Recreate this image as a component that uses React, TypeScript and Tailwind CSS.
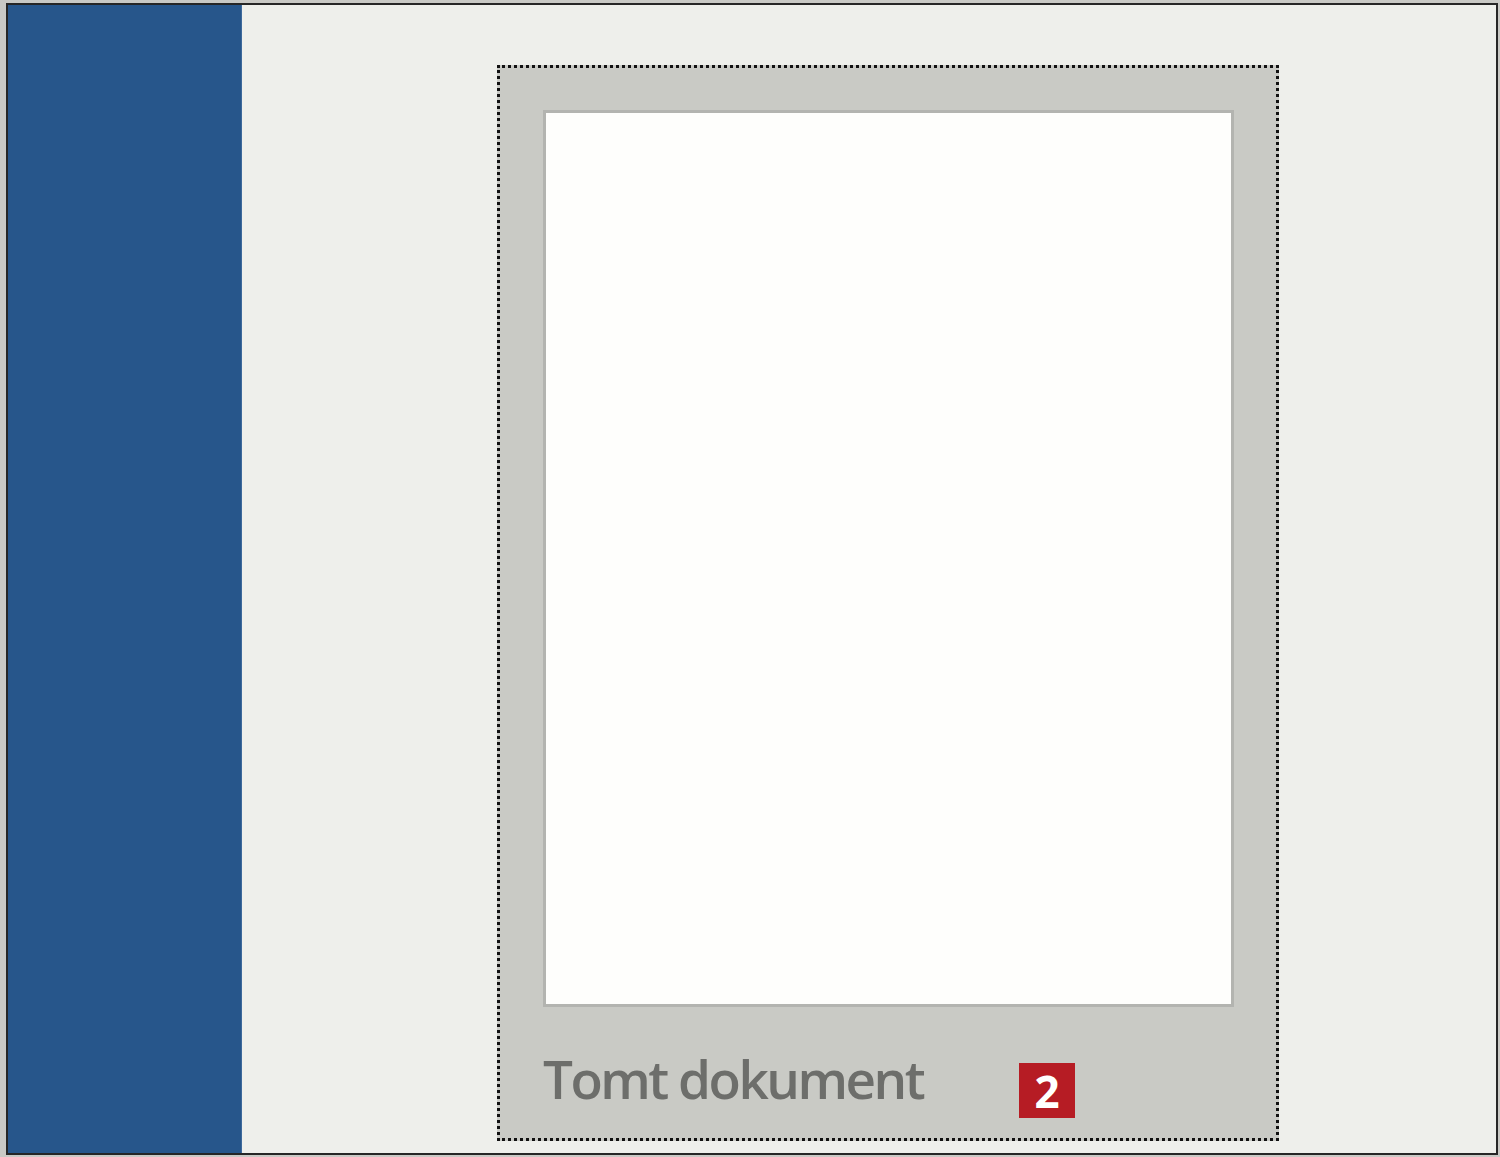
import React from 'react';

export default function App() {
  return (
    <div className="w-[1500px] h-[1157px] bg-[#c9c9c5] pt-[3px] pl-[6px] pr-[2px] pb-[2px]">
      <div className="flex h-full border-2 border-[#262626]">
        {/* left ribbon */}
        <div className="w-[234px] shrink-0 bg-[#27568b] border-r border-[#3e6a9c]" />

        <div className="flex-1 bg-[#eeefeb] pl-[255px] pt-[60px]">
          <div className="w-[782px] h-[1076px] bg-[#c9cac5] border-[3px] border-dotted border-[#111111] pl-[43px] pt-[42px]">
            <div className="w-[691px] h-[897px] bg-[#fefefc] border-[3px] border-[#b3b4b0]" />
            <div
              className="flex items-start mt-[56px]"
              style={{ fontFamily: '"Open Sans", "Noto Sans", sans-serif' }}
            >
              <span className="w-[476px] text-[53px] leading-none tracking-[-2.5px] text-[#6d6e6b] font-semibold -mt-[11px]">
                Tomt dokument
              </span>
              <span className="w-[56px] h-[55px] bg-[#b61c24] flex items-center justify-center text-white text-[44px] font-bold leading-none">
                2
              </span>
            </div>
          </div>
        </div>
      </div>
    </div>
  );
}
